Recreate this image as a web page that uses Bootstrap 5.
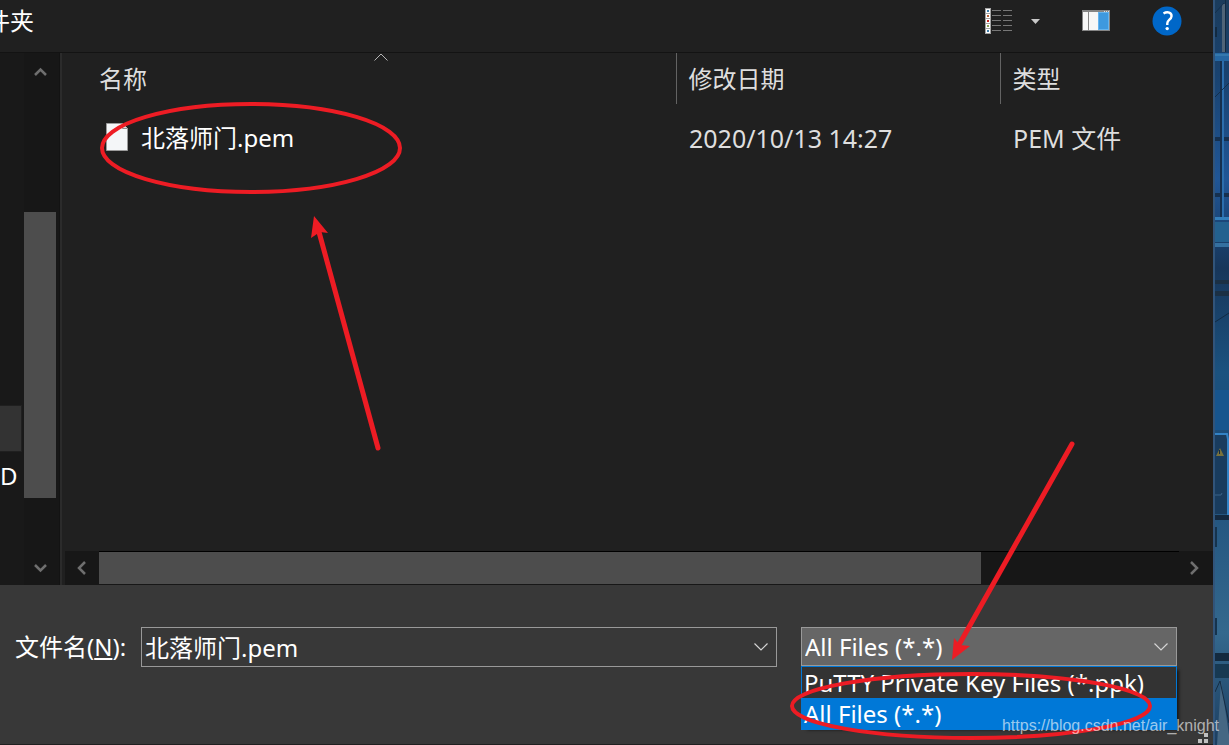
<!DOCTYPE html>
<html lang="zh-CN">
<head>
<meta charset="utf-8">
<meta name="viewport" content="width=device-width, initial-scale=1">
<title>选择文件</title>
<link href="https://cdn.jsdelivr.net/npm/bootstrap@5.3.0/dist/css/bootstrap.min.css" rel="stylesheet">
<style>
  body { background: #383838; color: #fff; font-family: "Noto Sans", "Noto Sans CJK SC", sans-serif; font-size: 24px; line-height: 32px; }
  svg { display: block; }
  .plain-btn { background: none; border: 0; padding: 0; color: inherit; line-height: inherit; }
  .toolbar { height: 53px; background: #202020; border-bottom: 1px solid #131313; padding: 0 31px 10px 0; }
  .folder-label { margin-left: -14px; }
  .view-arrow { margin-left: 18px; }
  .preview-btn { margin-left: 42px; }
  .help-btn { margin-left: 42px; }
  .tree { width: 24px; background: #191919; }
  .tree-selected { height: 47px; width: 22px; margin-top: 352px; background: #333; border: 1px solid #202020; border-left: 0; }
  .track { background: #171717; color: #6f6f6f; }
  .v-track { width: 35px; padding-right: 3px; }
  .v-track button { height: 36px; padding: 2px 0 0 9px; }
  .v-thumb { height: 286px; background: #4d4d4d; margin-top: 123px; }
  .divider { width: 3px; background: #2b2b2b; border-left: 1px solid #131313; }
  .files { background: #202020; }
  .file-table { table-layout: fixed; margin: 0; }
  .file-table th { font-weight: 400; color: #dedede; padding: 10px 12px 9px; line-height: 32px; }
  .file-table th + th { border-left: 1px solid #636363; }
  .file-table th:first-child { padding-left: 37px; }
  .file-table td { padding: 18px 13px; color: #dedede; font-size: 25px; }
  .file-table td:first-child { padding-left: 44px; color: #fff; font-size: 24px; }
  .file-name { gap: 13px; }
  .col-name { width: 614px; }
  .col-date { width: 324px; }
  .sort-mark { left: 312px; top: 0; }
  .h-track { height: 34px; margin-left: 3px; }
  .h-track button { width: 34px; padding-left: 11px; }
  .h-rail { border-top: 1px solid #000; }
  .h-thumb { width: 882px; background: #4d4d4d; height: 32px; }
  .bottom-bar { height: 160px; background: #383838; padding: 42px 36px 0 15px; border-bottom: 1px solid #202020; }
  .name-label { width: 126px; height: 40px; padding-top: 4px; }
  .combo { height: 40px; border: 1px solid #999; }
  .combo input { background: transparent; border: 0; color: #fff; padding: 1px 0 0 3px; min-width: 0; outline: 0; }
  .filter { width: 376px; margin-left: 24px; }
  .filter select { appearance: none; width: 100%; height: 39px; background: #666; color: #fff; border: 1px solid #999; border-radius: 0; padding: 0 0 0 3px; line-height: 36px; display: block; }
  .filter-arrow { right: 9px; top: 16px; pointer-events: none; }
  .options { top: 39px; left: 0; right: 0; background: #333; border: 1px solid #0078d7; box-shadow: 4px 2px 3px -2px rgba(0,0,0,.6); }
  .options button { display: block; width: 100%; height: 31px; padding-left: 2px; text-align: left; }
  .options .chosen { background: #0078d7; }
  .grip { right: 5px; bottom: 1px; }
  .desktop { width: 16px; border-left: 2px solid #31547a; background: #1b4f80; }
  .annotations { pointer-events: none; z-index: 20; }
  .watermark { right: 10px; bottom: 7px; z-index: 21; font: 16px/24px "Liberation Sans", sans-serif; color: rgba(255,255,255,.62); }
</style>
</head>
<body>
<div class="position-relative d-flex vh-100 overflow-hidden">
  <div class="d-flex flex-column flex-grow-1 position-relative">
    <header class="toolbar d-flex align-items-center flex-shrink-0">
      <button class="plain-btn folder-label me-auto">件夹</button>
      <button class="plain-btn" aria-label="更改视图">
        <svg width="28" height="26" viewBox="0 0 28 26"><path fill="#a5a5a5" d="M0 0h6v26H0z"/><path fill="#fff" d="M1 1h4v4H1zM1 6h4v4H1zM1 11h4v4H1zM1 16h4v4H1zM1 21h4v4H1z"/><path fill="#3e7ca8" d="M2 2h2v2H2zM2 22h2v2H2z"/><path fill="#b86339" d="M2 7h2v2H2z"/><path fill="#c22720" d="M2 12h2v2H2z"/><path fill="#89a052" d="M2 17h2v2H2z"/><path stroke="#777" d="M7 2.500h9m2 0h9M7 7.500h9m2 0h9M7 12.500h9m2 0h9M7 17.500h9m2 0h9M7 22.500h9m2 0h9"/></svg>
      </button>
      <button class="plain-btn view-arrow" aria-label="更多选项"><svg width="9" height="5" viewBox="0 0 9 5"><path fill="#c9c9c9" d="M0 0h9L4.500 5z"/></svg></button>
      <button class="plain-btn preview-btn" aria-label="预览窗格">
        <svg width="28" height="22" viewBox="0 0 28 22"><path fill="#858585" d="M0 0h28v21H0z"/><path fill="#f7f7f7" d="M1 2h5v18H1zM7 2h9v18H7z"/><path fill="#65b4ef" d="M16 2h11v18H16z"/><path fill="#3e99df" d="M17 3h9v16h-9z"/><path fill="#ddd" d="M22 1h1v1h-1zM24 1h1v1h-1zM26 1h1v1h-1z"/></svg>
      </button>
      <button class="plain-btn help-btn" aria-label="帮助">
        <svg width="30" height="30" viewBox="0 0 30 30"><circle cx="15" cy="15" r="14.500" fill="#0067c8"/><path d="M11.500 7.500c4-2.500 8.500-1 8 2.800-.3 3.200-4.200 3.600-4.200 7v1.700" fill="none" stroke="#fff" stroke-width="2.400"/><circle cx="15.200" cy="22.600" r="1.700" fill="#fff"/></svg>
      </button>
    </header>

    <main class="d-flex flex-grow-1">
      <nav class="tree overflow-hidden flex-shrink-0" aria-label="文件夹">
        <div class="tree-selected"></div>
        <div class="pt-2 text-nowrap">D</div>
      </nav>
      <div class="track v-track d-flex flex-column flex-shrink-0">
        <button class="plain-btn" aria-label="向上滚动"><svg width="14" height="10" viewBox="0 0 14 10"><path d="M2 8l5.500-5.500L13 8" fill="none" stroke="currentColor" stroke-width="2.500"/></svg></button>
        <div class="v-thumb"></div>
        <button class="plain-btn mt-auto" aria-label="向下滚动"><svg width="14" height="10" viewBox="0 0 14 10"><path d="M2 2l5.500 5.500L13 2" fill="none" stroke="currentColor" stroke-width="2.500"/></svg></button>
      </div>
      <div class="divider flex-shrink-0"></div>
      <section class="files d-flex flex-column flex-grow-1 position-relative">
        <svg class="sort-mark position-absolute" width="14" height="8" viewBox="0 0 14 8"><path d="M.500 7.500L7 1l6.500 6.500" fill="none" stroke="#b5b5b5"/></svg>
        <table class="file-table w-100">
          <colgroup><col class="col-name"><col class="col-date"><col></colgroup>
          <thead><tr><th scope="col">名称</th><th scope="col">修改日期</th><th scope="col">类型</th></tr></thead>
          <tbody><tr>
            <td><div class="file-name d-flex align-items-center"><svg width="22" height="30" viewBox="0 0 22 30"><path d="M.500.500h16l5 5v22H.500z" fill="#f4f6f8" stroke="#9b9b9b"/><path d="M16.500.500v5h5" fill="#ddd" stroke="#8e8e8e"/></svg>北落师门.pem</div></td>
            <td>2020/10/13 14:27</td>
            <td>PEM 文件</td>
          </tr></tbody>
        </table>
        <div class="track h-track d-flex mt-auto">
          <button class="plain-btn" aria-label="向左滚动"><svg width="10" height="14" viewBox="0 0 10 14"><path d="M9 1L3 7l6 6" fill="none" stroke="currentColor" stroke-width="2.500"/></svg></button>
          <div class="h-rail flex-grow-1"><div class="h-thumb"></div></div>
          <button class="plain-btn" aria-label="向右滚动"><svg width="10" height="14" viewBox="0 0 10 14"><path d="M1 1l6 6-6 6" fill="none" stroke="currentColor" stroke-width="2.500"/></svg></button>
        </div>
      </section>
    </main>

    <footer class="bottom-bar d-flex align-items-start flex-shrink-0">
      <label class="name-label flex-shrink-0 text-nowrap" for="fileName">文件名(<u>N</u>):</label>
      <div class="combo d-flex flex-grow-1 align-items-center">
        <input class="flex-grow-1" id="fileName" type="text" value="北落师门.pem">
        <button class="plain-btn pe-2" aria-label="最近的文件"><svg width="14" height="8" viewBox="0 0 14 8"><path d="M.500.500L7 7 13.500.500" fill="none" stroke="#d5d5d5" stroke-width="1.200"/></svg></button>
      </div>
      <div class="filter position-relative flex-shrink-0">
        <select aria-label="文件类型"><option>PuTTY Private Key Files (*.ppk)</option><option selected>All Files (*.*)</option></select>
        <svg class="filter-arrow position-absolute" width="14" height="8" viewBox="0 0 14 8"><path d="M.500.500L7 7 13.500.500" fill="none" stroke="#d5d5d5" stroke-width="1.200"/></svg>
        <div class="options position-absolute">
          <button class="plain-btn">PuTTY Private Key Files (*.ppk)</button>
          <button class="plain-btn chosen">All Files (*.*)</button>
        </div>
      </div>
    </footer>
    <svg class="grip position-absolute" width="10" height="11" viewBox="0 0 10 11"><path fill="#c0c0c0" d="M6 0h4v4H6zM0 6h4v4H0zM6 6h4v4H6z"/></svg>
  </div>

  <aside class="desktop flex-shrink-0" aria-hidden="true">
    <svg class="w-100 h-100" viewBox="0 0 14 745" preserveAspectRatio="none">
      <defs>
        <linearGradient id="sea" x2="0" y2="1"><stop offset="0" stop-color="#1b3c5c"/><stop offset=".1" stop-color="#19426f"/><stop offset=".24" stop-color="#205696"/><stop offset=".36" stop-color="#17365a"/><stop offset=".5" stop-color="#1b527f"/><stop offset=".6" stop-color="#1b4c79"/><stop offset=".85" stop-color="#34688d"/><stop offset="1" stop-color="#1c3e60"/></linearGradient>
      </defs>
      <path fill="url(#sea)" d="M0 0h14v745H0z"/>
      <path fill="#4f6478" d="M7 4h3v48H7z"/><path fill="#122a41" d="M10 0h1v52h-1zM0 27h2v10H0z"/>
      <path fill="#2567a3" d="M0 53h14v8H0z"/><path fill="#3478ad" d="M0 54h14v2H0z"/>
      <path fill="#15304f" d="M5 61h2v156H5zM0 137h14v4H0zM0 193h14v4H0z"/><path fill="#2c6ead" d="M7 61h2v156H7z"/>
      <path stroke="#142f4b" d="M0 97l14-14M0 13L9 3"/>
      <path fill="#337fbb" d="M0 217h14v3H0z"/><path fill="#23618f" d="M0 222h14v20H0z"/><path fill="#3570a0" d="M0 243h14v4H0z"/>
      <path fill="#1b3044" d="M0 280h14v4H0zM0 291h14v5H0z"/><path stroke="#132b43" d="M0 322l14-9"/>
      <path fill="#17558e" d="M0 390h14v40H0z"/><path fill="#193c5e" d="M0 434h13v80H0z"/><path fill="none" stroke="#3282c5" stroke-width="2" d="M0 434h12l1 5v76"/>
      <path d="M1 456l4-8 4 8z" fill="#79713b"/><path fill="#14293f" d="M4 450h1v4H4zM0 515h14v5H0z"/><path stroke="#3a6288" fill="none" d="M0 495h6l1-2"/>
      <path stroke="#15334d" stroke-width="2" fill="none" d="M1 527v20M1 618v17"/><path fill="#132a3f" d="M0 653h14v8H0z"/><path fill="#173952" d="M0 664h14v14H0z"/>
      <path fill="#456783" d="M6 681l8 54v10H2z"/><path stroke="#162c43" fill="none" d="M0 692l5-11 9 42"/>
    </svg>
  </aside>

  <svg class="annotations position-absolute top-0 start-0 w-100 h-100" viewBox="0 0 1229 745" preserveAspectRatio="none" fill="none" stroke="#ed1c24" stroke-linecap="round" aria-hidden="true">
    <ellipse cx="251" cy="148" rx="149" ry="44" stroke-width="4"/>
    <ellipse cx="971" cy="706" rx="179" ry="32" stroke-width="4"/>
    <path stroke-width="5" d="M378 448L319 232M1072 444L960 643"/>
    <path fill="#ed1c24" stroke="none" d="M314 216l14 17-8-1-9 6zM952 660l2-22 6 7 10 1z"/>
  </svg>
  <div class="watermark position-absolute">https://blog.csdn.net/air_knight</div>
</div>
<script src="https://cdn.jsdelivr.net/npm/bootstrap@5.3.0/dist/js/bootstrap.bundle.min.js"></script>
</body>
</html>
